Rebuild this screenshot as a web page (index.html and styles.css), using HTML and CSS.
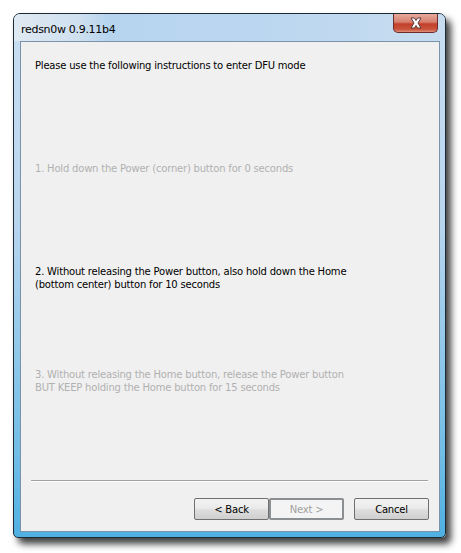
FILE: index.html
```html
<!DOCTYPE html>
<html lang="en">

<head>
    <meta charset="UTF-8">
    <meta name="viewport" content="width=device-width, initial-scale=1.0">
    <title>redsn0w 0.9.11b4</title>
    <link rel="stylesheet" href="styles.css">
</head>

<body>
    <div class="window">
        <div class="titlebar">
            <div class="glass"></div>
            <div class="title">redsn0w 0.9.11b4</div>
            <div class="btnClose">
                <svg width="18" height="12" viewBox="0 0 18 12">
                    <path d="M4 1 L7.5 1 L9 3.5 L10.5 1 L14 1 L11 6 L14 11 L10.5 11 L9 8.5 L7.5 11 L4 11 L7 6 Z"
                        fill="#ffffff" stroke="#5a3a3a" stroke-width="1" stroke-linejoin="round" />
                </svg>
            </div>
        </div>

        <div class="client">
            <div class="step">Please use the following instructions to enter DFU mode</div>
            <div class="step dim">1. Hold down the Power (corner) button for 0 seconds</div>
            <div class="step">2. Without releasing the Power button, also hold down the Home<br>(bottom center) button for 10 seconds</div>
            <div class="step dim">3. Without releasing the Home button, release the Power button<br>BUT KEEP holding the Home button for 15 seconds</div>

            <div class="footer">
                <div class="separator"></div>
                <div class="buttons">
                    <div class="btn">&lt; Back</div>
                    <div class="btn btnDefault">Next &gt;</div>
                    <div class="btn btnCancel">Cancel</div>
                </div>
            </div>
        </div>
    </div>
</body>

</html>
```

FILE: styles.css
```css
body {
    margin: 0;
    width: 461px;
    height: 553px;
    background-color: #FFF;
    font-family: Tahoma, "DejaVu Sans", sans-serif;
    overflow: hidden;
}

.window {
    position: relative;
    margin: 13px 0 0 13px;
    width: 431px;
    height: 523px;
    border: 1px solid #1d2a36;
    border-radius: 7px 7px 5px 5px;
    background: linear-gradient(to bottom, #c9def2 0%, #b8d5ee 40%, #6fbde6 85%, #4fb0e2 100%);
    box-shadow: 5px 6px 7px rgba(0, 0, 0, 0.75);
    display: flex;
    flex-direction: column;
}

.titlebar {
    position: relative;
    height: 27px;
    display: flex;
    align-items: center;
}

.glass {
    position: absolute;
    left: 0;
    top: 0;
    width: 431px;
    height: 27px;
    border-radius: 6px 6px 0 0;
    background: linear-gradient(to right, #dfe9f2 0%, #cfe0ef 15%, #b7d4ef 22%, #bcd7f0 60%, #c7dcef 100%);
}

.title {
    position: relative;
    padding-left: 7px;
    padding-top: 4px;
    font-family: "DejaVu Sans", sans-serif;
    font-size: 11px;
    letter-spacing: -0.3px;
    color: #000;
}

.btnClose {
    position: absolute;
    left: 379px;
    top: 0;
    width: 43px;
    height: 18px;
    border: 1px solid #6b2d2a;
    border-top: none;
    border-radius: 0 0 5px 5px;
    background: linear-gradient(to bottom, #e8a99b 0%, #d7806f 45%, #c3402a 55%, #c9533c 85%, #e0917b 100%);
    display: flex;
    align-items: center;
    justify-content: center;
}

.client {
    margin: 0 5px 5px 6px;
    flex: 1;
    border: 1px solid #7a93aa;
    background-color: #F0F0F0;
    display: flex;
    flex-direction: column;
    padding-top: 17px;
    font-family: "DejaVu Sans", sans-serif;
    font-size: 10px;
    letter-spacing: -0.2px;
}

.step {
    height: 103px;
    padding-left: 14px;
    line-height: 13px;
    color: #000;
}

.dim {
    color: #b0b0b0;
}

.footer {
    margin-top: auto;
    padding-bottom: 11px;
}

.separator {
    margin: 0 11px 16px 10px;
    border-top: 1px solid #a0a0a0;
    border-bottom: 1px solid #fff;
}

.buttons {
    display: flex;
    justify-content: flex-end;
    padding-right: 10px;
}

.btn {
    width: 73px;
    height: 20px;
    border: 1px solid #707070;
    border-radius: 2px;
    background: linear-gradient(to bottom, #f2f2f2 0%, #ebebeb 45%, #dddddd 55%, #cfcfcf 100%);
    display: flex;
    align-items: center;
    justify-content: center;
    color: #000;
}

.btnDefault {
    border: 2px solid #8b8f92;
    width: 71px;
    height: 18px;
    background: #f4f4f4;
    color: #a0a0a0;
}

.btnCancel {
    margin-left: 10px;
}
```
